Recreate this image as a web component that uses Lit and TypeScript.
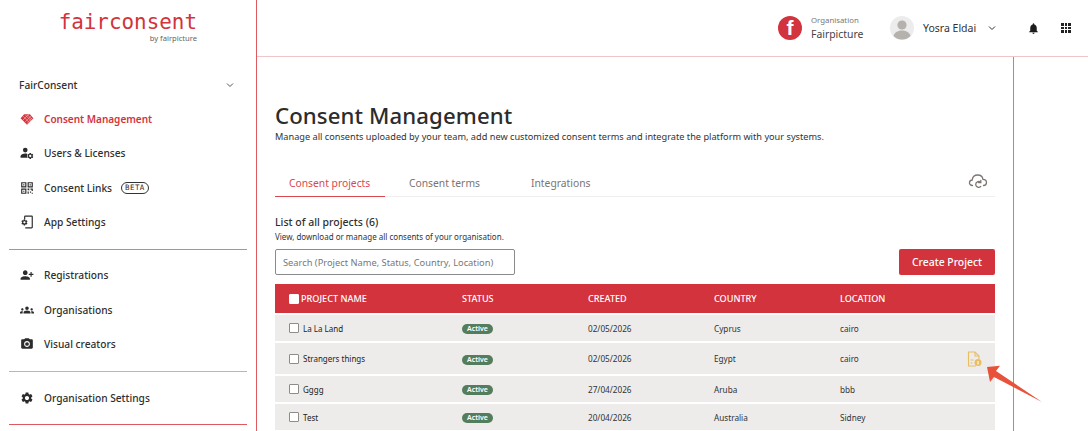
import { LitElement, html, css, svg } from "lit";
import { customElement } from "lit/decorators.js";

const RED = "#d2333c";
const gearPath = "M19.14 12.94c.04-.3.06-.61.06-.94 0-.32-.02-.64-.07-.94l2.03-1.58c.18-.14.23-.41.12-.61l-1.92-3.32c-.12-.22-.37-.29-.59-.22l-2.39.96c-.5-.38-1.03-.7-1.62-.94l-.36-2.54c-.04-.24-.24-.41-.48-.41h-3.84c-.24 0-.43.17-.47.41l-.36 2.54c-.59.24-1.13.57-1.62.94l-2.39-.96c-.22-.08-.47 0-.59.22L2.74 8.87c-.12.21-.08.47.12.61l2.03 1.58c-.05.3-.09.63-.09.94s.02.64.07.94l-2.03 1.58c-.18.14-.23.41-.12.61l1.92 3.32c.12.22.37.29.59.22l2.39-.96c.5.38 1.03.7 1.62.94l.36 2.54c.05.24.24.41.48.41h3.84c.24 0 .44-.17.47-.41l.36-2.54c.59-.24 1.13-.56 1.62-.94l2.39.96c.22.08.47 0 .59-.22l1.92-3.32c.12-.22.07-.47-.12-.61l-2.01-1.58zM12 15.6c-1.98 0-3.6-1.62-3.6-3.6s1.62-3.6 3.6-3.6 3.6 1.62 3.6 3.6-1.62 3.6-3.6 3.6z";

const icons = {
  consent: svg`<path fill="${RED}" d="M7 4h10l6 6.500L12 22 1 10.500z"/><path stroke="#f6c4c6" stroke-width="1" fill="none" d="M5 7l11 11M9 5l10 10M13 5l7 7M8 18 19 7M5 14 15 4M12 20 21 10"/>`,
  users: svg`<circle cx="9" cy="7" r="4"/><path d="M1 20v-2.500C1 14.500 5.500 13 9 13c1 0 2 .1 3 .4V20z"/><g transform="translate(11 10.500) scale(.55)"><path d="${gearPath}"/></g>`,
  qr: svg`<path d="M2 2h9v9H2zm2 2v5h5V4zm1.500 1.500h2v2h-2zM13 2h9v9h-9zm2 2v5h5V4zm1.500 1.500h2v2h-2zM2 13h9v9H2zm2 2v5h5v-5zm1.500 1.500h2v2h-2zM13 13h3v3h-3zm5 0h4v4h-2v-2h-2zm-5 5h2v4h-2zm4 0h2v2h-2zm3 2h2v2h-2z"/>`,
  app: svg`<path d="M9 1h11a2 2 0 0 1 2 2v18a2 2 0 0 1-2 2H9v-2h11V3H9v4H7V3a2 2 0 0 1 2-2z"/><g transform="translate(1 6) scale(.55)"><path d="${gearPath}"/></g>`,
  reg: svg`<g transform="matrix(-1 0 0 1 24 0)"><path d="M15 12c2.210 0 4-1.790 4-4s-1.790-4-4-4-4 1.790-4 4 1.790 4 4 4zm-9-2V7H4v3H1v2h3v3h2v-3h3v-2H6zm9 4c-2.670 0-8 1.340-8 4v2h16v-2c0-2.660-5.330-4-8-4z"/></g>`,
  orgs: svg`<path d="M12 12.750c1.630 0 3.070.39 4.240.9 1.080.48 1.760 1.560 1.760 2.730V18H6v-1.610c0-1.180.68-2.260 1.760-2.730 1.170-.52 2.610-.91 4.240-.91zM4 13c1.100 0 2-.9 2-2s-.9-2-2-2-2 .9-2 2 .9 2 2 2zm1.130 1.100C4.760 14.040 4.390 14 4 14c-.99 0-1.930.21-2.780.58C.48 14.900 0 15.620 0 16.430V18h4.500v-1.610c0-.83.23-1.610.63-2.290zM20 13c1.100 0 2-.9 2-2s-.9-2-2-2-2 .9-2 2 .9 2 2 2zm4 3.430c0-.81-.48-1.530-1.220-1.850-.85-.37-1.790-.58-2.780-.58-.39 0-.76.04-1.130.1.4.68.63 1.460.63 2.290V18H24v-1.570zM12 6c1.660 0 3 1.340 3 3s-1.340 3-3 3-3-1.340-3-3 1.340-3 3-3z"/>`,
  camera: svg`<circle cx="12" cy="12" r="3.200"/><path d="M9 2L7.170 4H4c-1.100 0-2 .9-2 2v12c0 1.100.9 2 2 2h16c1.100 0 2-.9 2-2V6c0-1.100-.9-2-2-2h-3.170L15 2H9zm3 15c-2.760 0-5-2.240-5-5s2.240-5 5-5 5 2.240 5 5-2.240 5-5 5z"/>`,
  gear: svg`<path d="${gearPath}"/>`,
};

type IconName = keyof typeof icons;

const group1: { icon: IconName; label: string; active?: boolean; beta?: boolean }[] = [
  { icon: "consent", label: "Consent Management", active: true },
  { icon: "users", label: "Users & Licenses" },
  { icon: "qr", label: "Consent Links", beta: true },
  { icon: "app", label: "App Settings" },
];
const group2: { icon: IconName; label: string }[] = [
  { icon: "reg", label: "Registrations" },
  { icon: "orgs", label: "Organisations" },
  { icon: "camera", label: "Visual creators" },
];

const rows = [
  { name: "La La Land", created: "02/05/2026", country: "Cyprus", location: "cairo", h: 26 },
  { name: "Strangers things", created: "02/05/2026", country: "Egypt", location: "cairo", h: 31, doc: true },
  { name: "Gggg", created: "27/04/2026", country: "Aruba", location: "bbb", h: 26 },
  { name: "Test", created: "20/04/2026", country: "Australia", location: "Sidney", h: 26 },
];

@customElement("app-root")
export class AppRoot extends LitElement {
  static styles = css`
    :host {
      --red: #d2333c;
      display: grid;
      grid-template-columns: 257px 1fr;
      width: 1088px;
      height: 431px;
      overflow: hidden;
      position: relative;
      background: #fff;
      font-family: "Noto Sans", sans-serif;
      color: #2f2f2f;
    }
    .side {
      border-right: 1px solid #dd5a60;
      display: flex;
      flex-direction: column;
      padding: 0 9px;
      height: 431px;
    }
    .logo {
      width: 138px;
      margin: 10px 0 0 50px;
      display: flex;
      flex-direction: column;
      align-items: flex-end;
      height: 66px;
    }
    .logo b {
      font: 400 20.9px/24px "DejaVu Sans Mono", monospace;
      color: var(--red);
    }
    .logo span {
      font-size: 7.6px;
      line-height: 8px;
      color: #666;
    }
    .group-head {
      display: flex;
      justify-content: space-between;
      align-items: center;
      height: 18px;
      padding: 0 12px 0 10px;
      font-size: 10.2px;
      font-weight: 500;
    }
    .group-head svg { width: 10px; height: 10px; }
    .nav { display: flex; flex-direction: column; }
    .nav.first { margin-top: 8px; }
    .nav a {
      height: 34.3px;
      display: flex;
      align-items: center;
      gap: 10px;
      padding-left: 11px;
      font-size: 10.2px;
      font-weight: 500;
      white-space: nowrap;
    }
    .nav a svg { width: 14px; height: 14px; fill: #2b2b2b; flex: none; }
    .nav a.on { color: var(--red); font-size: 10px; font-weight: 600; }
    .beta {
      border: 1px solid #333;
      border-radius: 7px;
      font: 400 7.5px/10px "DejaVu Sans Mono", monospace;
      padding: 0 3px;
      margin-left: -1px;
      letter-spacing: 0.4px;
    }
    hr { border: 0; height: 1px; margin: 0; flex: none; }
    hr.a { background: #e57b80; margin-top: 10px; }
    hr.b { background: #eba0a4; margin-top: 10px; }
    hr.c { background: #dd5a60; margin-top: 9px; }
    .nav.second { margin-top: 8px; }
    .nav.third { margin-top: 9px; }

    .main { display: flex; flex-direction: column; min-width: 0; }
    .top {
      height: 56px;
      border-bottom: 1px solid #f1c4c6;
      display: flex;
      align-items: center;
      flex: none;
    }
    .org-logo {
      width: 24px;
      height: 24px;
      border-radius: 50%;
      background: var(--red);
      margin-left: 521px;
      display: flex;
      align-items: center;
      justify-content: center;
      color: #fff;
      font: 700 21px/24px "Liberation Sans", sans-serif;
      flex: none;
    }
    .org { margin-left: 9px; display: flex; flex-direction: column; width: 79px; flex: none; }
    .org small { font-size: 7.8px; line-height: 11px; color: #777; }
    .org span { font-size: 10.4px; line-height: 16px; color: #444; }
    .avatar { width: 24px; height: 24px; flex: none; }
    .user { margin-left: 9px; font-size: 10.5px; width: 64px; color: #333; flex: none; white-space: nowrap; }
    .chev { width: 10px; height: 10px; flex: none; }
    .bell { width: 13px; height: 13px; margin-left: 30px; flex: none; }
    .apps {
      margin-left: 21px;
      width: 10px;
      height: 10px;
      display: grid;
      grid-template-columns: repeat(3, 2.6px);
      grid-auto-rows: 2.6px;
      gap: 1px;
      flex: none;
    }
    .apps i { background: #222; display: block; }

    .body {
      width: 757px;
      box-sizing: border-box;
      border-right: 1px solid #d9787c;
      height: 374px;
      padding: 45px 18px 0;
      flex: none;
    }
    h1 { margin: 0; font-size: 22.2px; line-height: 28px; font-weight: 500; color: #2c2c2c; letter-spacing: 0.1px; white-space: nowrap; }
    .lead { font-size: 9.2px; line-height: 12px; color: #333; margin-top: 1px; white-space: nowrap; }
    .tabs {
      display: flex;
      align-items: stretch;
      height: 26px;
      margin-top: 27px;
      border-bottom: 1px solid #f0eeee;
      font-size: 10.3px;
      color: #7a7471;
    }
    .tab { line-height: 26px; white-space: nowrap; }
    .tab.on { color: #d9484f; border-bottom: 1px solid #d9484f; margin-bottom: -1px; width: 96px; padding-left: 14px; }
    .tab.t2 { margin-left: 24px; width: 122px; }
    .cloud { margin-left: auto; width: 20px; height: 18px; margin: 0 7px 4px auto; align-self: center; }
    .list-title { font-size: 10.5px; line-height: 14px; font-weight: 500; margin-top: 18px; }
    .list-sub { font-size: 8px; line-height: 11px; color: #333; margin-top: 2px; }
    .toolbar { display: flex; justify-content: space-between; margin-top: 7px; }
    .search {
      width: 240px;
      height: 26px;
      box-sizing: border-box;
      border: 1px solid #8b8b8b;
      border-radius: 2px;
      padding: 0 7px;
      display: flex;
      align-items: center;
      font-size: 9.3px;
      color: #777;
      white-space: nowrap;
    }
    .btn {
      width: 96px;
      height: 26px;
      background: var(--red);
      border-radius: 2px;
      color: #fff;
      font-size: 10.4px;
      font-weight: 500;
      display: flex;
      align-items: center;
      justify-content: center;
    }
    .table { margin-top: 9px; display: flex; flex-direction: column; gap: 2px; }
    .row {
      display: grid;
      grid-template-columns: 187px 126px 126px 126px 1fr;
      align-items: center;
      background: #edecea;
      font-size: 8.2px;
      color: #333;
    }
    .row.head {
      background: var(--red);
      color: #fff;
      height: 29px;
      font-size: 9.1px;
      font-weight: 500;
    }
    .name { display: flex; align-items: center; padding-left: 14px; gap: 4px; color: #222; font-size: 8px; }
    .head .name { gap: 2px; color: #fff; font-size: 9.1px; }
    .cb { width: 8px; height: 8px; border: 1px solid #8f8b88; background: #fff; border-radius: 1px; flex: none; }
    .head .cb { border-color: #fff; }
    .pill {
      display: inline-block;
      background: #537d5d;
      color: #fff;
      font-size: 7px;
      font-weight: 600;
      line-height: 10px;
      padding: 0 5px;
      border-radius: 5px;
    }
    .last { display: flex; justify-content: space-between; align-items: center; padding-right: 13px; }
    .doc { width: 15px; height: 16px; }
    .arrow { position: absolute; left: 980px; top: 360px; width: 70px; height: 50px; }
  `;

  private navRow(n: { icon: IconName; label: string; active?: boolean; beta?: boolean }) {
    return html`<a class=${n.active ? "on" : ""}>
      <svg viewBox="0 0 24 24">${icons[n.icon]}</svg>${n.label}
      ${n.beta ? html`<span class="beta">BETA</span>` : ""}
    </a>`;
  }

  render() {
    return html`
      <aside class="side">
        <div class="logo"><b>fairconsent</b><span>by fairpicture</span></div>
        <div class="group-head">
          FairConsent
          <svg viewBox="0 0 10 10" fill="none" stroke="#555" stroke-width="1"><path d="M2 3.500 5 6.500 8 3.500" /></svg>
        </div>
        <div class="nav first">${group1.map((n) => this.navRow(n))}</div>
        <hr class="a" />
        <div class="nav second">${group2.map((n) => this.navRow(n))}</div>
        <hr class="b" />
        <div class="nav third">${this.navRow({ icon: "gear", label: "Organisation Settings" })}</div>
        <hr class="c" />
      </aside>
      <div class="main">
        <header class="top">
          <div class="org-logo">f</div>
          <div class="org"><small>Organisation</small><span>Fairpicture</span></div>
          <svg class="avatar" viewBox="0 0 24 24">
            <circle cx="12" cy="12" r="12" fill="#ececec" />
            <circle cx="12" cy="9" r="4.600" fill="#b5b1ad" />
            <path d="M3.500 20c1-4 5-5.500 8.500-5.500s7.500 1.500 8.500 5.500a12 12 0 0 1-17 0z" fill="#b5b1ad" />
          </svg>
          <div class="user">Yosra Eldai</div>
          <svg class="chev" viewBox="0 0 10 10" fill="none" stroke="#333" stroke-width="1"><path d="M2 3.500 5 6.500 8 3.500" /></svg>
          <svg class="bell" viewBox="0 0 24 24" fill="#1c1c1c"><path d="M12 22c1.100 0 2-.9 2-2h-4c0 1.100.9 2 2 2zm6-6v-5c0-3.070-1.630-5.640-4.500-6.320V4c0-.83-.67-1.500-1.500-1.500s-1.500.67-1.500 1.500v.68C7.640 5.360 6 7.920 6 11v5l-2 2v1h16v-1l-2-2z" /></svg>
          <div class="apps">${Array.from({ length: 9 }, () => html`<i></i>`)}</div>
        </header>
        <section class="body">
          <h1>Consent Management</h1>
          <div class="lead">Manage all consents uploaded by your team, add new customized consent terms and integrate the platform with your systems.</div>
          <nav class="tabs">
            <div class="tab on">Consent projects</div>
            <div class="tab t2">Consent terms</div>
            <div class="tab">Integrations</div>
            <svg class="cloud" viewBox="0 0 20 18" fill="none" stroke="#7d7570" stroke-width="1.300" stroke-linecap="round">
              <path d="M4.500 13.500C2.500 13.500 1.200 12 1.500 10.300 1.800 8.800 3 8 4.200 8 4.500 4.800 7 3 9.800 3c2.700 0 4.800 1.800 5.200 4.300 2 .1 3.500 1.500 3.500 3.200 0 1.700-1.300 3-3 3" />
              <path d="M12.600 10.200A3 3 0 0 0 7.700 12.500a3 3 0 0 0 5 2" />
              <path d="M12.800 8.400v2.200h-2.200" />
            </svg>
          </nav>
          <div class="list-title">List of all projects (6)</div>
          <div class="list-sub">View, download or manage all consents of your organisation.</div>
          <div class="toolbar">
            <div class="search">Search (Project Name, Status, Country, Location)</div>
            <div class="btn">Create Project</div>
          </div>
          <div class="table">
            <div class="row head">
              <div class="name"><span class="cb"></span>PROJECT NAME</div>
              <div>STATUS</div>
              <div>CREATED</div>
              <div>COUNTRY</div>
              <div>LOCATION</div>
            </div>
            ${rows.map(
              (r) => html`<div class="row" style="height:${r.h}px">
                <div class="name"><span class="cb"></span>${r.name}</div>
                <div><span class="pill">Active</span></div>
                <div>${r.created}</div>
                <div>${r.country}</div>
                <div class="last">
                  ${r.location}
                  ${r.doc
                    ? html`<svg class="doc" viewBox="0 0 15 16" fill="none" stroke="#e9bd62" stroke-width="1.100">
                        <path d="M9 15H1.500V1h6.500l4 4v3" />
                        <path d="M8 1v4h4M3.500 9h3M3.500 12h2" />
                        <circle cx="11" cy="11.500" r="3.500" fill="#e9bd62" stroke="none" />
                        <path d="M11 10v3.500" stroke="#fff" />
                      </svg>`
                    : ""}
                </div>
              </div>`
            )}
          </div>
        </section>
      </div>
      <svg class="arrow" viewBox="0 0 70 50"><path d="M7 7 20 5.700 16 11 62 42 14 17 10 22z" fill="#e8523a" /></svg>
    `;
  }
}
